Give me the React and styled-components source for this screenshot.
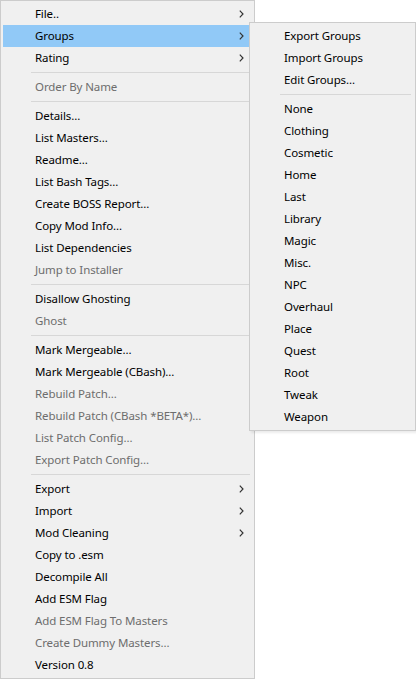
import styled, { createGlobalStyle } from 'styled-components';

const GlobalStyle = createGlobalStyle`
	html, body {
		margin: 0;
		padding: 0;
		background: #ffffff;
	}
	body {
		font-family: 'Noto Sans', 'Open Sans', sans-serif;
		font-size: 11.5px;
		letter-spacing: -0.1px;
	}
`;

const Page = styled.div`
	position: relative;
	width: 416px;
	height: 679px;
	overflow: hidden;
`;

const Menu = styled.ul`
	/* Box */
	list-style: none;
	margin: 0;
	box-sizing: border-box;
	background-color: #f0f0f0;
	border: 1px solid #cccccc;
	padding: 2px;
	width: ${(props) => props.width}px;
	display: flex;
	flex-direction: column;
`;

const SubMenu = styled(Menu)`
	position: absolute;
	left: 249px;
	top: 22px;
	box-shadow: 2px 2px 2px rgba(0, 0, 0, 0.08);
`;

const Item = styled.li`
	height: 22px;
	display: flex;
	align-items: center;
	padding-left: 32px;
	padding-right: 8px;
	color: ${(props) => (props.disabled ? '#6d6d6d' : '#000000')};
	background-color: ${(props) => (props.active ? '#91c9f7' : 'transparent')};
	white-space: nowrap;
`;

const Label = styled.span`
	flex: 1;
	line-height: 22px;
`;

const Separator = styled.li`
	height: 7px;
	display: flex;
	align-items: center;
	padding-left: 28px;
	padding-right: 2px;

	&::after {
		content: '';
		flex: 1;
		height: 1px;
		background-color: #d7d7d7;
	}
`;

const Arrow = styled.svg`
	width: 5px;
	height: 8px;
	flex-shrink: 0;
`;

function Chevron() {
	return (
		<Arrow viewBox="0 0 5 8">
			<path d="M0.8 0.6 L4 4 L0.8 7.4" fill="none" stroke="#333" strokeWidth="1.2" />
		</Arrow>
	);
}

const mainItems = [
	{ label: 'File..', sub: true },
	{ label: 'Groups', sub: true, active: true },
	{ label: 'Rating', sub: true },
	'-',
	{ label: 'Order By Name', disabled: true },
	'-',
	{ label: 'Details...' },
	{ label: 'List Masters...' },
	{ label: 'Readme...' },
	{ label: 'List Bash Tags...' },
	{ label: 'Create BOSS Report...' },
	{ label: 'Copy Mod Info...' },
	{ label: 'List Dependencies' },
	{ label: 'Jump to Installer', disabled: true },
	'-',
	{ label: 'Disallow Ghosting' },
	{ label: 'Ghost', disabled: true },
	'-',
	{ label: 'Mark Mergeable...' },
	{ label: 'Mark Mergeable (CBash)...' },
	{ label: 'Rebuild Patch...', disabled: true },
	{ label: 'Rebuild Patch (CBash *BETA*)...', disabled: true },
	{ label: 'List Patch Config...', disabled: true },
	{ label: 'Export Patch Config...', disabled: true },
	'-',
	{ label: 'Export', sub: true },
	{ label: 'Import', sub: true },
	{ label: 'Mod Cleaning', sub: true },
	{ label: 'Copy to .esm' },
	{ label: 'Decompile All' },
	{ label: 'Add ESM Flag' },
	{ label: 'Add ESM Flag To Masters', disabled: true },
	{ label: 'Create Dummy Masters...', disabled: true },
	{ label: 'Version 0.8' },
];

const groupItems = [
	{ label: 'Export Groups' },
	{ label: 'Import Groups' },
	{ label: 'Edit Groups...' },
	'-',
	{ label: 'None' },
	{ label: 'Clothing' },
	{ label: 'Cosmetic' },
	{ label: 'Home' },
	{ label: 'Last' },
	{ label: 'Library' },
	{ label: 'Magic' },
	{ label: 'Misc.' },
	{ label: 'NPC' },
	{ label: 'Overhaul' },
	{ label: 'Place' },
	{ label: 'Quest' },
	{ label: 'Root' },
	{ label: 'Tweak' },
	{ label: 'Weapon' },
];

function renderItems(items) {
	return items.map((item, i) =>
		item === '-' ? (
			<Separator key={i} />
		) : (
			<Item key={i} active={item.active} disabled={item.disabled}>
				<Label>{item.label}</Label>
				{item.sub && <Chevron />}
			</Item>
		)
	);
}

function App() {
	return (
		<Page>
			<GlobalStyle />
			<Menu width={255}>{renderItems(mainItems)}</Menu>
			<SubMenu width={167}>{renderItems(groupItems)}</SubMenu>
		</Page>
	);
}

export default App;
